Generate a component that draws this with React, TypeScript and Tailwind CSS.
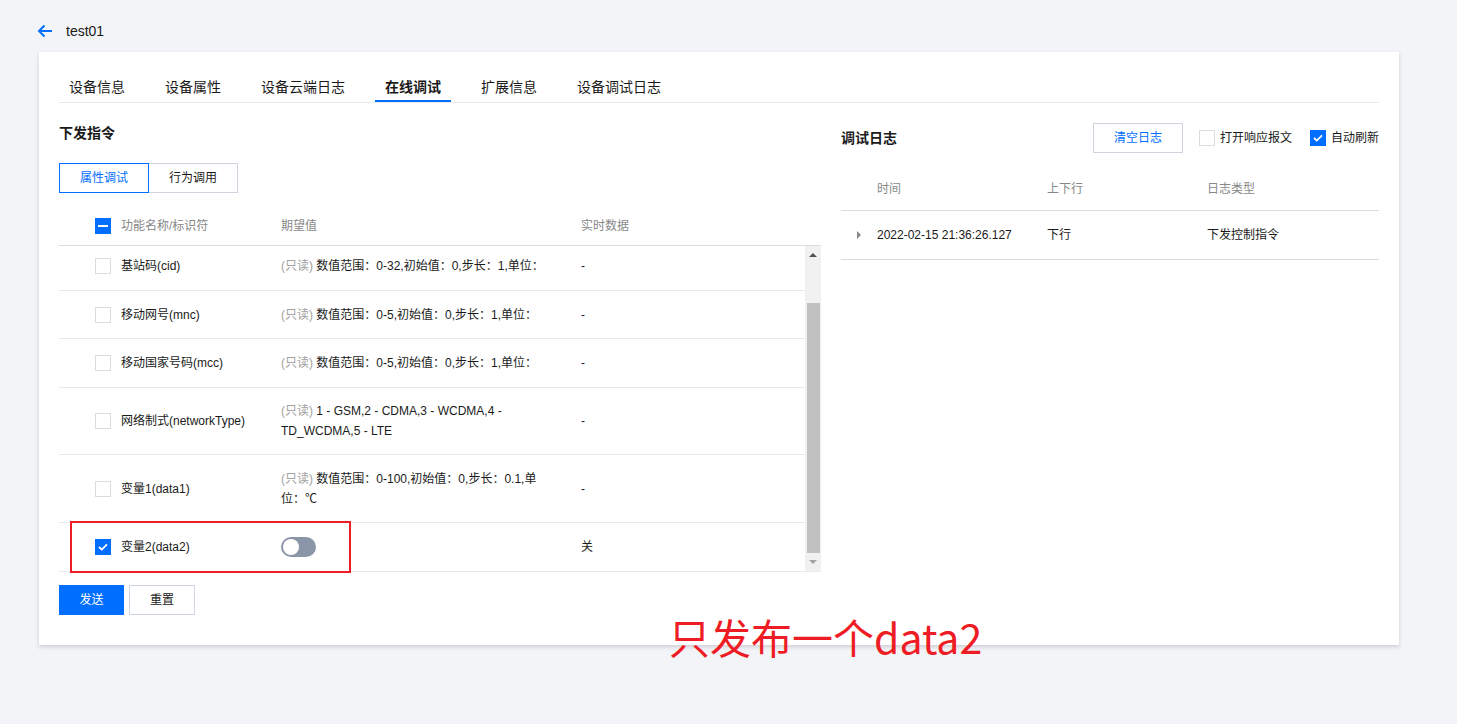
import { useState } from "react";

const FONT = { fontFamily: '"Liberation Sans", "Noto Sans CJK SC", sans-serif' };

function Box({ checked, mixed }: { checked?: boolean; mixed?: boolean }) {
  if (mixed) {
    return (
      <span className="w-4 h-4 bg-[#006eff] flex items-center justify-center shrink-0">
        <span className="w-[10px] h-[2px] bg-white" />
      </span>
    );
  }
  if (checked) {
    return (
      <span className="w-4 h-4 bg-[#006eff] flex items-center justify-center shrink-0">
        <svg width="10" height="8" viewBox="0 0 10 8">
          <path d="M1 4l2.8 2.6L9 1.3" fill="none" stroke="#fff" strokeWidth="1.8" />
        </svg>
      </span>
    );
  }
  return <span className="w-4 h-4 border border-[#dcdcdc] bg-white shrink-0" />;
}

const rows = [
  { name: "基站码(cid)", desc: "数值范围：0-32,初始值：0,步长：1,单位：", val: "-", h: "h-[45px] pb-1" },
  { name: "移动网号(mnc)", desc: "数值范围：0-5,初始值：0,步长：1,单位：", val: "-", h: "h-[48px]" },
  { name: "移动国家号码(mcc)", desc: "数值范围：0-5,初始值：0,步长：1,单位：", val: "-", h: "h-[49px]" },
  {
    name: "网络制式(networkType)",
    desc: "1 - GSM,2 - CDMA,3 - WCDMA,4 - TD_WCDMA,5 - LTE",
    val: "-",
    h: "h-[67px]",
  },
  { name: "变量1(data1)", desc: "数值范围：0-100,初始值：0,步长：0.1,单位：℃", val: "-", h: "h-[68px]" },
];

export default function App() {
  const [tab] = useState("在线调试");
  const tabs = ["设备信息", "设备属性", "设备云端日志", "在线调试", "扩展信息", "设备调试日志"];

  return (
    <div className="relative min-h-[724px] bg-[#f3f4f7] text-[#1a1a1a]" style={FONT}>
      {/* HEADER */}
      <div className="h-[52px] pt-5 px-[37px] flex items-start gap-[13px]">
        <div className="h-[22px] flex items-center">
          <svg width="16" height="14" viewBox="0 0 16 14">
            <path d="M15 7H2M7.5 1.5L2 7l5.5 5.5" fill="none" stroke="#006eff" strokeWidth="2" />
          </svg>
        </div>
        <span className="text-[14px] leading-[22px]">test01</span>
      </div>

      {/* CARD */}
      <div className="ml-[39px] w-[1360px] bg-white shadow-[0_2px_4px_rgba(54,58,80,0.2)] px-5 pb-[30px]">
        {/* TABS */}
        <div className="pt-5 flex gap-5 border-b border-[#e7eaef]">
          {tabs.map((t) => (
            <div
              key={t}
              className={
                "h-[30px] pt-[4px] px-[10px] text-[14px] leading-[22px] border-b-2 " +
                (t === tab ? "border-[#006eff] font-bold" : "border-transparent")
              }
            >
              {t}
            </div>
          ))}
        </div>

        <div className="flex gap-5">
          {/* LEFT */}
          <div className="w-[762px]">
            <div className="mt-[19px] text-[14px] leading-[22px] font-bold">下发指令</div>
            <div className="mt-[19px] flex text-[12px]">
              <div className="w-[90px] h-[30px] border border-[#006eff] text-[#006eff] flex items-center justify-center">
                属性调试
              </div>
              <div className="w-[89px] h-[30px] border border-l-0 border-[#cfd5de] flex items-center justify-center">
                行为调用
              </div>
            </div>

            {/* TABLE HEADER */}
            <div className="mt-[13px] h-[40px] flex items-center border-b border-[#d9dde3] text-[12px] text-[#888]">
              <div className="w-[206px] pl-9 flex items-center gap-[10px]">
                <Box mixed />
                <span>功能名称/标识符</span>
              </div>
              <div className="w-[300px] px-4">期望值</div>
              <div className="px-4">实时数据</div>
            </div>

            {/* TABLE BODY */}
            <div className="flex text-[12px] leading-[20px]">
              <div className="flex-1">
                {rows.map((r) => (
                  <div key={r.name} className={"flex items-center border-b border-[#e7eaef] " + r.h}>
                    <div className="w-[206px] pl-9 flex items-center gap-[10px]">
                      <Box />
                      <span>{r.name}</span>
                    </div>
                    <div className="w-[300px] px-4">
                      <span className="text-[#a2a2a2]">(只读)</span> {r.desc}
                    </div>
                    <div className="px-4">{r.val}</div>
                  </div>
                ))}
                <div className="flex items-center h-[49px] border-b border-[#e7eaef]">
                  <div className="w-[206px] pl-9 flex items-center gap-[10px]">
                    <Box checked />
                    <span>变量2(data2)</span>
                  </div>
                  <div className="w-[300px] px-4">
                    <div className="w-[35px] h-5 rounded-full bg-[#8a95a8] p-[2px] flex items-center">
                      <span className="w-4 h-4 rounded-full bg-white" />
                    </div>
                  </div>
                  <div className="px-4">关</div>
                </div>
              </div>

              {/* SCROLLBAR */}
              <div className="w-4 bg-[#f1f1f1] flex flex-col items-center border-b border-[#e7eaef]">
                <div className="h-[17px] flex items-center justify-center">
                  <span className="w-0 h-0 border-x-4 border-x-transparent border-b-4 border-b-[#505050]" />
                </div>
                <div className="h-[40px]" />
                <div className="w-[13px] h-[250px] bg-[#c1c1c1]" />
                <div className="flex-1 flex items-center justify-center">
                  <span className="w-0 h-0 border-x-4 border-x-transparent border-t-4 border-t-[#a3a3a3]" />
                </div>
              </div>
            </div>

            {/* ACTIONS */}
            <div className="mt-[13px] flex gap-[5px] text-[12px]">
              <button className="w-[65px] h-[30px] bg-[#006eff] text-white">发送</button>
              <button className="w-[66px] h-[30px] border border-[#cfd5de] bg-white">重置</button>
            </div>
          </div>

          {/* RIGHT */}
          <div className="flex-1">
            <div className="mt-5 h-[30px] flex items-center text-[12px]">
              <span className="text-[14px] font-bold">调试日志</span>
              <div className="ml-auto w-[90px] h-[30px] border border-[#cfd5de] text-[#006eff] flex items-center justify-center">
                清空日志
              </div>
              <div className="ml-4 flex items-center gap-[5px]">
                <Box />
                <span>打开响应报文</span>
              </div>
              <div className="ml-[18px] flex items-center gap-[5px]">
                <Box checked />
                <span>自动刷新</span>
              </div>
            </div>

            <div className="mt-[15px] h-[43px] flex items-center border-b border-[#d9dde3] text-[12px] text-[#888]">
              <div className="w-[190px] pl-9">时间</div>
              <div className="w-[160px] px-4">上下行</div>
              <div className="px-4">日志类型</div>
            </div>
            <div className="h-[49px] flex items-center border-b border-[#d9dde3] text-[12px]">
              <div className="w-[190px] pl-[16px] flex items-center">
                <span className="w-0 h-0 border-y-4 border-y-transparent border-l-4 border-l-[#888]" />
                <span className="ml-[16px]">2022-02-15 21:36:26.127</span>
              </div>
              <div className="w-[160px] px-4">下行</div>
              <div className="px-4">下发控制指令</div>
            </div>
          </div>
        </div>
      </div>

      {/* ANNOTATIONS */}
      <div className="absolute left-[70px] top-[521px] w-[281px] h-[52px] border-2 border-[#ee1c25]" />
      <div
        className="absolute left-[669px] top-[616px] text-[41px] leading-none font-normal text-[#ee1c25]"
        style={{ fontFamily: '"Noto Sans CJK SC", sans-serif' }}
      >
        只发布一个data2
      </div>
    </div>
  );
}
